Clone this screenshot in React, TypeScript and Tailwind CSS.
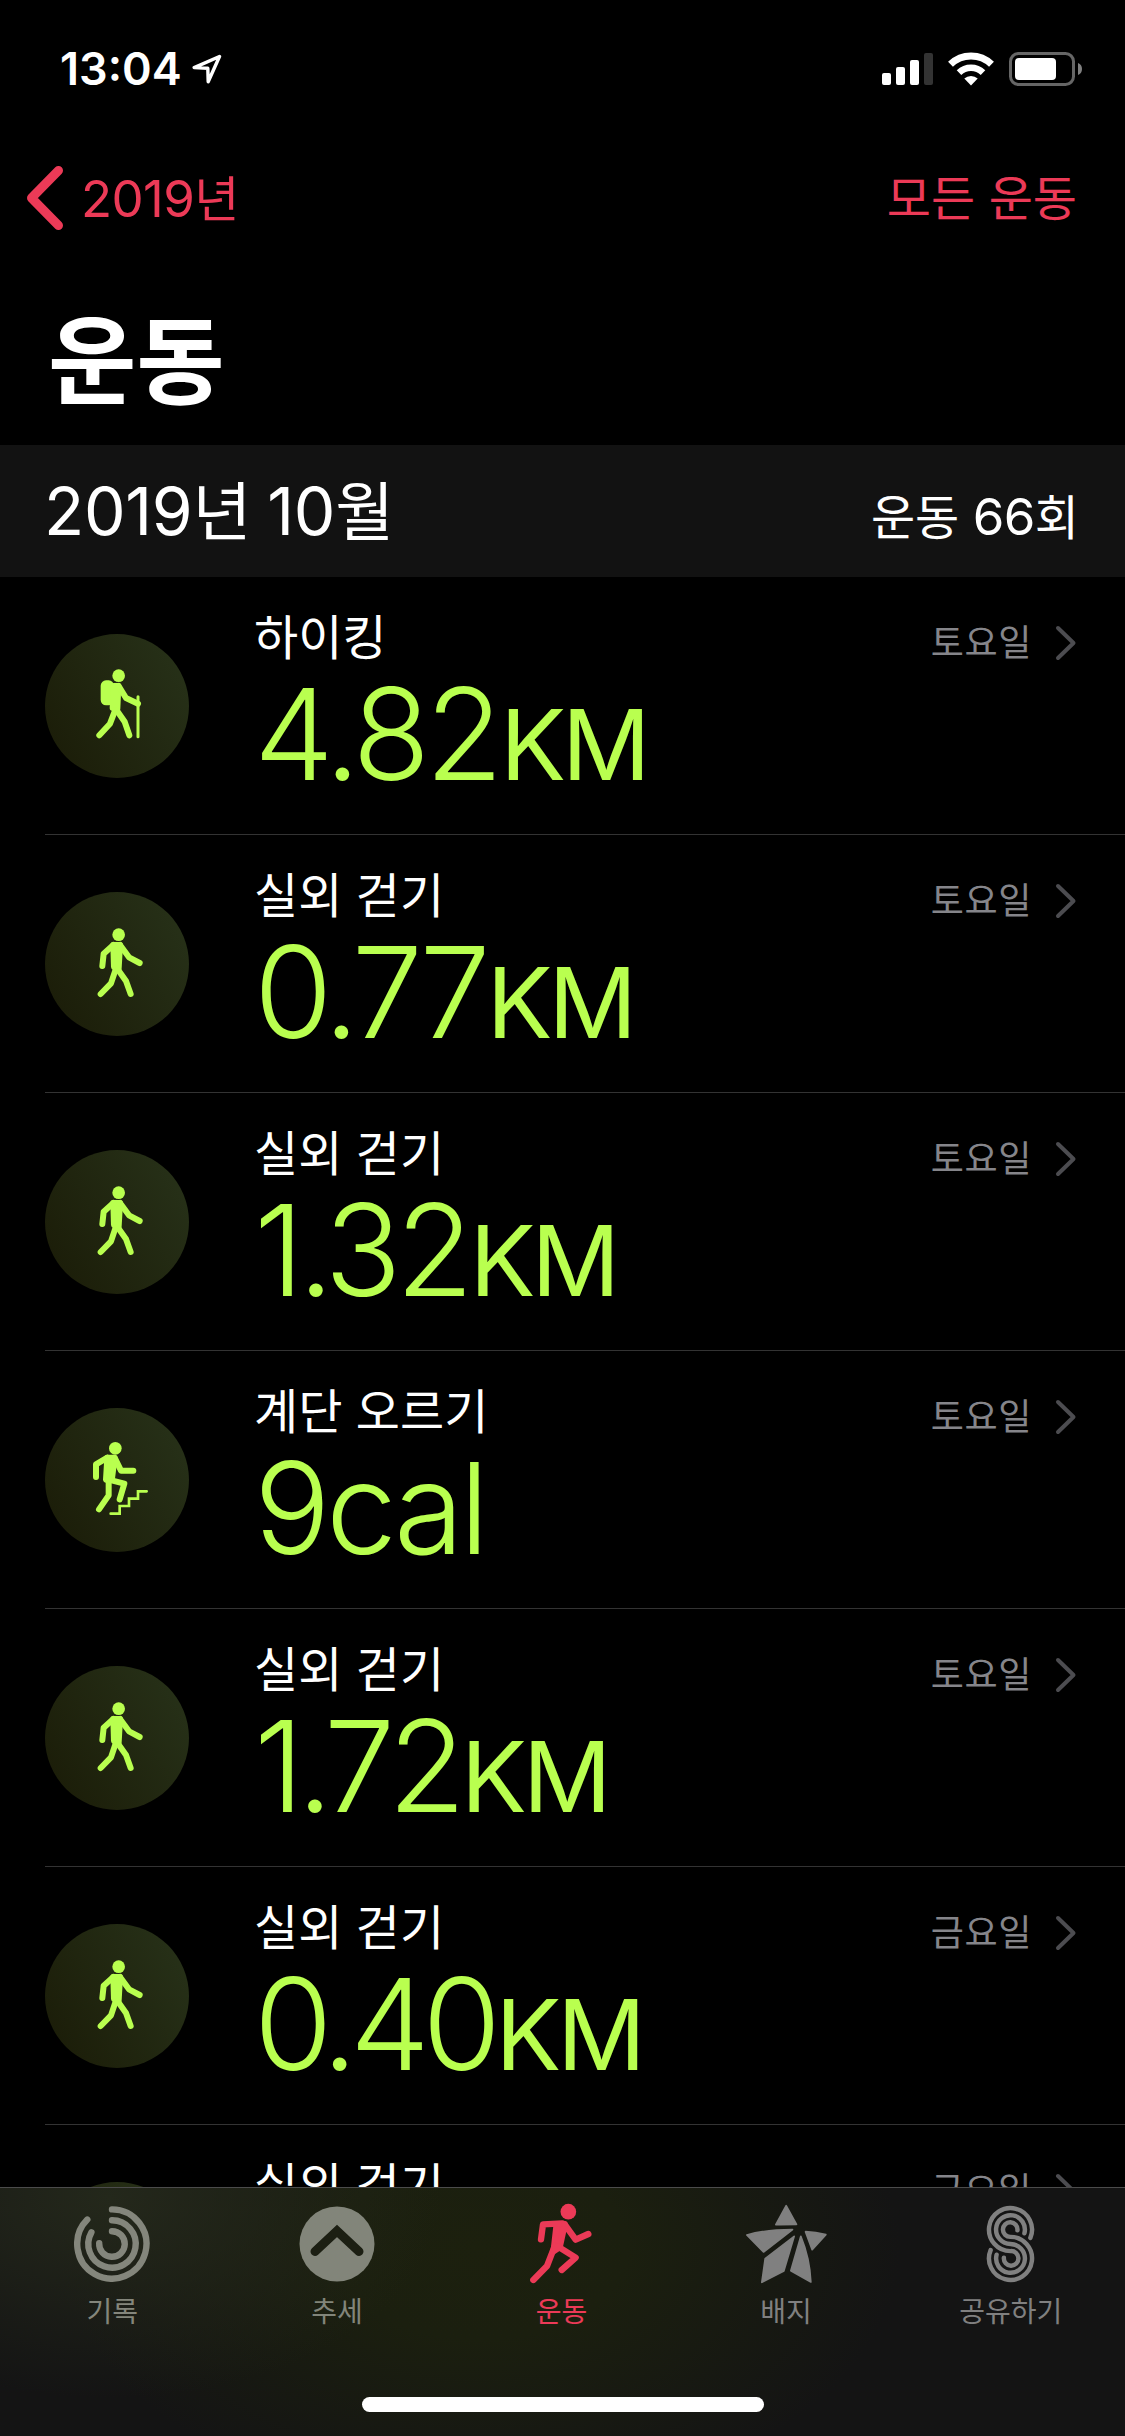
import type { ReactNode } from "react";
import clsx from "clsx";

type Activity = "hiking" | "walking" | "stairs";

interface Workout {
  id: number;
  activity: Activity;
  title: string;
  value?: string;
  unit?: "KM" | "cal";
  tracking?: string;
  day: string;
}

const workouts: Workout[] = [
  { id: 1, activity: "hiking", title: "하이킹", value: "4.82", unit: "KM", tracking: "tracking-[-5px]", day: "토요일" },
  { id: 2, activity: "walking", title: "실외 걷기", value: "0.77", unit: "KM", tracking: "tracking-[-5.8px]", day: "토요일" },
  { id: 3, activity: "walking", title: "실외 걷기", value: "1.32", unit: "KM", tracking: "tracking-[-5.9px]", day: "토요일" },
  { id: 4, activity: "stairs", title: "계단 오르기", value: "9", unit: "cal", tracking: "tracking-[-4.3px]", day: "토요일" },
  { id: 5, activity: "walking", title: "실외 걷기", value: "1.72", unit: "KM", tracking: "tracking-[-7px]", day: "토요일" },
  { id: 6, activity: "walking", title: "실외 걷기", value: "0.40", unit: "KM", tracking: "tracking-[-7.5px]", day: "금요일" },
  { id: 7, activity: "walking", title: "실외 걷기", day: "금요일" },
];

function StatusBar() {
  return (
    <div className="flex h-[138px] shrink-0 items-center justify-between pr-[42px] pl-[60px] text-white">
      <div className="flex items-center">
        <span className="-mt-[2px] text-[45px] leading-none font-semibold">13:04</span>
        <svg viewBox="0 0 30 31" className="ml-[10px] h-[31px] w-[30px]" fill="none" stroke="currentColor" strokeWidth="3.4" strokeLinejoin="round">
          <path d="M27.5 2.5 2.2 13.6l13.6.6.4 13.6z" />
        </svg>
      </div>
      <div className="flex items-center">
        <svg viewBox="0 0 52 34" className="h-[34px] w-[52px]" fill="currentColor">
          <rect x="0" y="21" width="9" height="12" rx="2" />
          <rect x="14" y="15" width="9" height="18" rx="2" />
          <rect x="28" y="8" width="9" height="25" rx="2" />
          <rect x="42" y="1" width="9" height="32" rx="2" fill="#333333" />
        </svg>
        <svg viewBox="0 0 46 34" className="ml-[14px] h-[34px] w-[46px]" fill="none" stroke="currentColor">
          <path d="M2.5 12.3a29.5 29.5 0 0 1 41 0" strokeWidth="7" />
          <path d="M11 20.6a17.4 17.4 0 0 1 24 0" strokeWidth="6.6" />
          <path d="M23 33.4 16.3 26.6a9.6 9.6 0 0 1 13.4 0z" fill="currentColor" stroke="none" />
        </svg>
        <svg viewBox="0 0 74 34" className="ml-[15px] h-[34px] w-[74px]">
          <rect x="1.5" y="1.5" width="63" height="31" rx="8" fill="none" stroke="#666666" strokeWidth="3" />
          <rect x="6" y="6" width="41" height="22" rx="4" fill="#ffffff" />
          <path d="M69 11v12a6.5 6.5 0 0 0 0-12z" fill="#808080" />
        </svg>
      </div>
    </div>
  );
}

function NavBar() {
  return (
    <div className="flex h-[120px] shrink-0 items-center justify-between pr-[48px] pl-[27px] text-[#ec3a57]">
      <div className="flex items-center">
        <svg viewBox="0 0 36 64" className="h-[64px] w-[36px]" fill="none" stroke="currentColor" strokeWidth="9" strokeLinecap="round" strokeLinejoin="round">
          <path d="M31.5 4.5 4.5 32l27 27.5" />
        </svg>
        <span className="ml-[18px] text-[51px] leading-none tracking-[-0.6px]">
          2019<span className="text-[49px]">년</span>
        </span>
      </div>
      <span className="mt-[2px] text-[48px] leading-none">모든 운동</span>
    </div>
  );
}

function ActivityIcon({ activity }: { activity: Activity }) {
  if (activity === "hiking") {
    return (
      <svg viewBox="45 42 432 432" className="size-full" fill="none" stroke="currentColor" strokeWidth="18" strokeLinecap="round" strokeLinejoin="round">
        <circle cx="266" cy="167" r="19" fill="currentColor" stroke="none" />
        <rect x="212" y="181" width="40" height="75" rx="16" fill="currentColor" stroke="none" />
        <path d="M251 198h14l-3 68-14-2z" fill="currentColor" />
        <path d="M266 198l22 36 36 17" />
        <path d="M255 272l-15 39-32 35" />
        <path d="M261 272l23 33 14 41" />
        <path d="M324 230v120" strokeWidth="9" />
      </svg>
    );
  }
  if (activity === "stairs") {
    return (
      <svg viewBox="45 39 432 432" className="size-full" fill="none" stroke="currentColor" strokeWidth="18" strokeLinecap="round" strokeLinejoin="round">
        <circle cx="256" cy="160" r="19" fill="currentColor" stroke="none" />
        <path d="M232 188h22l-8 62-18 4z" fill="currentColor" />
        <path d="M198 246v-38l34-20" />
        <path d="M256 192l17 35h37" />
        <path d="M236 256v45l-29 42" />
        <path d="M236 254l47 12-14 47" />
        <path d="M242 356h27v-23h28v-22h27v-22h26" strokeWidth="8" strokeLinejoin="miter" />
      </svg>
    );
  }
  return (
    <svg viewBox="45 36 432 432" className="size-full" fill="none" stroke="currentColor" strokeWidth="18" strokeLinecap="round" strokeLinejoin="round">
      <circle cx="266" cy="164" r="19" fill="currentColor" stroke="none" />
      <path d="M250 195h20l-4 70-14-4z" fill="currentColor" />
      <path d="M217 258l4-37 29-26" />
      <path d="M270 195l27 37 32 17" />
      <path d="M257 268l-14 42-31 32" />
      <path d="M263 268l25 35 14 39" />
    </svg>
  );
}

function WorkoutRow({ workout }: { workout: Workout }) {
  return (
    <div className="ml-[45px] flex h-[258px] shrink-0 border-b border-[#333333] pr-[48px]">
      <div className="mt-[57px] size-[144px] shrink-0 rounded-full bg-linear-60 from-[#1a1b07] to-[#28331a] text-[#b9ff4f]">
        <ActivityIcon activity={workout.activity} />
      </div>
      <div className="ml-[65px] flex flex-1 flex-col pt-[31px]">
        <span className="text-[48px] leading-[60px] text-white">{workout.title}</span>
        {workout.value && (
          <span className={clsx("mt-[11px] text-[127px] leading-[110px] font-[350] text-[#b9ff4f]", workout.tracking)}>
            {workout.value}
            {workout.unit === "KM" ? <span className="ml-[2px] text-[98px] font-normal tracking-[-4px]">KM</span> : workout.unit}
          </span>
        )}
      </div>
      <div className="flex h-[132px] items-center">
        <span className="-mt-px text-[36px] leading-none tracking-[0.6px] text-[#85858a]">{workout.day}</span>
        <svg viewBox="0 0 22 36" className="ml-[23px] h-[36px] w-[22px]" fill="none" stroke="#4c4c50" strokeWidth="4" strokeLinecap="round" strokeLinejoin="round">
          <path d="M3 3l15.5 15L3 33" />
        </svg>
      </div>
    </div>
  );
}

function RingsIcon() {
  return (
    <svg viewBox="-38 -38 76 76" className="size-[76px]" fill="none" stroke="currentColor" strokeWidth="6.4" strokeLinecap="round">
      <path d="M0-34.6a34.6 34.6 0 1 1-24.7 10.2" />
      <path d="M0-23.7a23.7 23.7 0 1 1-20.6 12" />
      <path d="M0-12.8a12.8 12.8 0 1 1-12.8 12" />
    </svg>
  );
}

function TrendsIcon() {
  return (
    <svg viewBox="-38 -38 76 76" className="size-[76px]">
      <circle r="37.5" fill="currentColor" />
      <path d="M-22 7.5 0-13 22 7.5" fill="none" stroke="#1c1f13" strokeWidth="9" strokeLinecap="round" />
    </svg>
  );
}

function RunnerIcon() {
  return (
    <svg viewBox="60 38 192 243" className="-mt-[2px] h-[81px] w-[64px]" fill="none" stroke="currentColor" strokeWidth="19" strokeLinecap="round" strokeLinejoin="round">
      <circle cx="178" cy="64" r="23.5" fill="currentColor" stroke="none" />
      <path d="M143 102h24l-15 68-18 12z" fill="currentColor" />
      <path d="M96 147l6-45 58-3" />
      <path d="M167 102l33 46 38-17" />
      <path d="M138 165l-24 62-41 42" />
      <path d="M146 168l54 34-42 37" />
    </svg>
  );
}

function BadgeIcon() {
  return (
    <svg viewBox="48 46 248 240" className="h-[80px] w-[83px]" fill="currentColor" stroke="currentColor" strokeWidth="5" strokeLinejoin="round">
      <path d="M171 51l31 56c-20 0-42 0-62 1z" />
      <path d="M53 139c45-13 92-16 137-16l-87 67z" />
      <path d="M229 129c20 1 41 4 61 9l-41 45z" />
      <path d="M195 143l-31 104-66 34 10-71z" />
      <path d="M215 143c18 44 28 90 30 137l-60-34z" />
    </svg>
  );
}

function SharingIcon() {
  return (
    <svg viewBox="769 44 148 235" className="h-[78px] w-[49px]" fill="none" stroke="currentColor" strokeWidth="13.5" strokeLinecap="round">
      <path d="M903 143A65 65 0 1 0 843 183A22 22 0 1 1 823 203" />
      <path d="M885 129A43.5 43.5 0 1 0 843 161.5A43.5 43.5 0 1 1 801 194" />
      <path d="M864 120A22 22 0 1 0 843 140A65 65 0 1 1 783 180" />
    </svg>
  );
}

function TabItem({ label, active, tone, children }: { label: string; active?: boolean; tone: string; children: ReactNode }) {
  return (
    <div className={clsx("flex flex-1 flex-col items-center", active ? "text-[#ec3a57]" : tone)}>
      <div className="mt-[15px] flex h-[82px] items-center justify-center">{children}</div>
      <span className="mt-[10px] text-[28px] leading-[34px]">{label}</span>
    </div>
  );
}

function TabBar() {
  return (
    <div className="flex h-[249px] shrink-0 flex-col border-t border-[#4b4b4b] bg-[#141414] bg-[radial-gradient(ellipse_330px_200px_at_110px_10px,#24281b_0%,transparent_100%),radial-gradient(ellipse_420px_260px_at_480px_60px,#1c200e_0%,#1b1f0f_35%,transparent_100%)]">
      <div className="mr-[2px] flex">
        <TabItem label="기록" tone="text-[#84867c]">
          <RingsIcon />
        </TabItem>
        <TabItem label="추세" tone="text-[#82857a]">
          <TrendsIcon />
        </TabItem>
        <TabItem label="운동" tone="text-[#82857a]" active>
          <RunnerIcon />
        </TabItem>
        <TabItem label="배지" tone="text-[#808080]">
          <BadgeIcon />
        </TabItem>
        <TabItem label="공유하기" tone="text-[#808080]">
          <SharingIcon />
        </TabItem>
      </div>
      <div className="mt-auto mb-[24px] h-[15px] w-[402px] self-center rounded-full bg-white" />
    </div>
  );
}

export default function App() {
  return (
    <div className="flex h-[2436px] w-[1125px] flex-col overflow-hidden bg-black font-['Inter','Noto_Sans_CJK_KR',sans-serif]">
      <StatusBar />
      <NavBar />
      <div className="flex h-[187px] shrink-0 items-center pt-[19px] pl-[48px]">
        <h1 className="text-[96px] leading-none font-bold text-white">운동</h1>
      </div>
      <div className="flex h-[132px] shrink-0 items-baseline justify-between bg-[#121212] pt-[33px] pr-[46px] pl-[44px] text-white">
        <span className="text-[66px] leading-[66px] tracking-[-0.3px]">
          2019<span className="text-[64px]">년</span> <span className="-ml-[2px]">10</span>
          <span className="text-[64px]">월</span>
        </span>
        <span className="text-[48px] leading-none">
          운동 <span className="text-[51px] tracking-[-0.6px]">66</span>회
        </span>
      </div>
      <div className="flex min-h-0 flex-1 flex-col overflow-hidden">
        {workouts.map((workout) => (
          <WorkoutRow key={workout.id} workout={workout} />
        ))}
      </div>
      <TabBar />
    </div>
  );
}
